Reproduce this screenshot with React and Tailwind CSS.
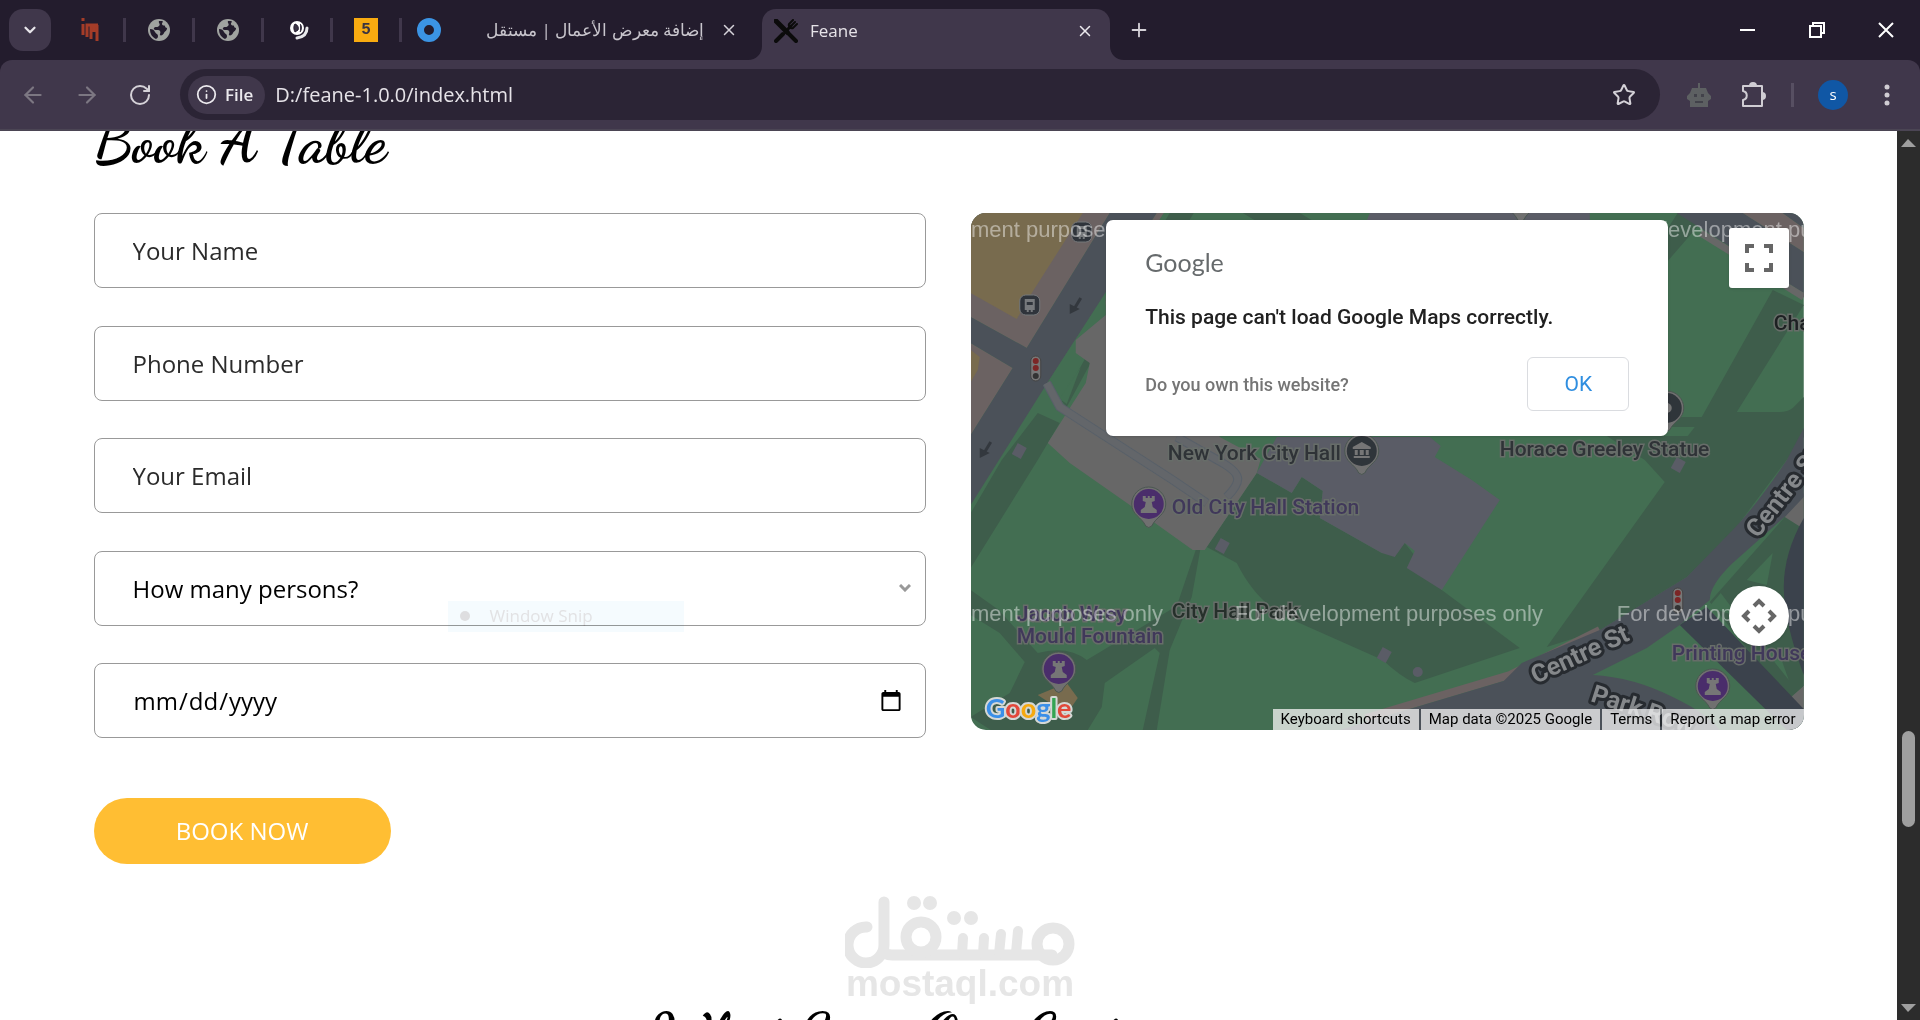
import React from 'react';
import { ArrowLeft, ArrowRight, ChevronDown, Info, Plus, RotateCw, Star, X } from 'lucide-react';

const GlobeIcon = () => (
  <svg viewBox="0 0 24 24" className="h-6 w-6">
    <circle cx="12" cy="12" r="11" fill="#a0a3a0" />
    <path d="M12 3c-1 2 2 3 0 5s-4 0-5 2 2 2 4 2 3 2 2 4 3 2 4-1c1-2 3-2 3-5-1 0-2-1-2-2s-3 0-3-2 2-2 0-3z" fill="#231c2d" />
    <path d="M3 11c3 0 4 1 5 3s3 2 3 4-1 2-2 3c-4-2-6-5-6-10z" fill="#231c2d" />
  </svg>
);

const RedIcon = () => (
  <svg viewBox="0 0 18 24" className="h-6 w-[18px]" fill="none" stroke="#a43c28" strokeWidth="3">
    <path d="M2 0v3M2 6v11M6 19V7h11M10 8v13M13 8v6M16 7v16" />
  </svg>
);

const SwirlIcon = () => (
  <svg viewBox="-6 0 28 22" className="h-[22px] w-[28px]">
    <circle cx="8" cy="9" r="7" fill="#fff" />
    <path d="M6 5c-2 3-1 6 0 8l3-2c1-2 0-5-3-6zM11 5c2 2 2 5 0 8" stroke="#231c2d" strokeWidth="1" fill="#3b3446" />
    <path d="M18 9c0 5-3 9-10 10" stroke="#e9e9ec" strokeWidth="3" fill="none" strokeLinecap="round" />
  </svg>
);

const FiveIcon = () => (
  <span className="flex h-6 w-6 items-center justify-center bg-[#f9ab10] font-mono text-base font-bold text-[#3b3440]">5</span>
);

const FoodIcon = () => (
  <svg viewBox="0 0 24 24" className="h-6 w-6 shrink-0" fill="none" stroke="#0b0b0b" strokeLinecap="round">
    <path d="M2 2l11 11" strokeWidth="5" />
    <path d="M12 12l10 10M2 22l7-7" strokeWidth="4" />
    <path d="M14 10l3-3" strokeWidth="3" />
    <path d="M19 1l-4 4c-1 3 2 5 4 4l4-4M21 3l-4 4" strokeWidth="2" />
  </svg>
);

const RobotIcon = () => (
  <svg viewBox="0 0 24 24" className="h-6 w-6" fill="#5d6062">
    <path d="M11 0h2v5h6l2 5 3 3v3l-3 2v6H3v-6l-3-2v-3l3-3 2-5h6z" />
    <path d="M7 11h3v3H7zM14 11h3v3h-3zM8 18h8v2H8z" fill="#42424a" />
  </svg>
);

const PuzzleIcon = () => (
  <svg viewBox="0 0 26 26" className="h-[26px] w-[26px]" fill="none" stroke="#d0cdd3" strokeWidth="2" strokeLinejoin="round">
    <path d="M2 4h19v20H2v-6c5-1 5-8 0-9z" />
    <path d="M9 4a3 3 0 0 1 6 0zM21 11a3 3 0 0 1 0 6z" fill="#d0cdd3" />
  </svg>
);

const pinnedTabs = [
  { name: 'Pinned 1', icon: <RedIcon /> },
  { name: 'Pinned 2', icon: <GlobeIcon /> },
  { name: 'Pinned 3', icon: <GlobeIcon /> },
  { name: 'Pinned 4', icon: <SwirlIcon /> },
  { name: 'Pinned 5', icon: <FiveIcon /> },
];

const TabStrip = () => (
  <div className="flex h-[60px] shrink-0 items-center bg-[#231c2d] pl-[9px]">
    <button aria-label="Search tabs" className="flex h-[42px] w-[42px] items-center justify-center rounded-[14px] bg-[#40374b]">
      <ChevronDown size={18} strokeWidth={3} color="#e8e6ea" />
    </button>
    <div className="ml-[6px] flex items-center">
      {pinnedTabs.map((tab) => (
        <div key={tab.name} className="flex h-6 w-[69px] items-center border-r-[3px] border-[#40374b]">
          <button aria-label={tab.name} className="flex w-full items-center justify-center">{tab.icon}</button>
        </div>
      ))}
    </div>
    <div className="flex w-[360px] items-center pr-6 pl-[15px]">
      <span className="h-6 w-6 shrink-0 rounded-full border-[7px] border-[#3b94e4]" />
      <span dir="rtl" className="ml-auto text-[17px] whitespace-nowrap text-[#c9c6cd]">إضافة معرض الأعمال | مستقل</span>
      <button aria-label="Close tab" className="ml-4"><X size={18} color="#d5d2d8" /></button>
    </div>
    <div className="relative flex h-[51px] w-[348px] items-center self-end rounded-t-[14px] bg-[#40374b] px-3 pb-2">
      <svg viewBox="0 0 14 14" className="absolute bottom-0 -left-[14px] h-[14px] w-[14px]">
        <path d="M14 0v14H0C8 14 14 8 14 0z" fill="#40374b" />
      </svg>
      <svg viewBox="0 0 14 14" className="absolute -right-[14px] bottom-0 h-[14px] w-[14px]">
        <path d="M0 0v14h14C6 14 0 8 0 0z" fill="#40374b" />
      </svg>
      <FoodIcon />
      <span className="ml-3 text-[17px] text-[#e6e3e8]">Feane</span>
      <button aria-label="Close tab" className="ml-auto mr-1"><X size={18} color="#eceaee" /></button>
    </div>
    <button aria-label="New tab" className="ml-[18px]"><Plus size={22} color="#d5d2d8" /></button>
    <div className="ml-auto flex">
      <button aria-label="Minimize" className="flex w-[69px] items-center justify-center">
        <svg width="15" height="15" stroke="#fff" strokeWidth="2"><path d="M0 7h15" /></svg>
      </button>
      <button aria-label="Restore" className="flex w-[69px] items-center justify-center">
        <svg width="16" height="16" fill="none" stroke="#fff" strokeWidth="2"><path d="M1 4h11v11H1zM4 4V1h11v10h-3" /></svg>
      </button>
      <button aria-label="Close window" className="flex w-[69px] items-center justify-center">
        <svg width="16" height="16" stroke="#fff" strokeWidth="2"><path d="M1 1l14 14M15 1L1 15" /></svg>
      </button>
    </div>
  </div>
);

const Toolbar = () => (
  <div className="bg-[#231c2d]">
    <div className="flex h-[71px] items-center rounded-t-xl border-b-2 border-[#4b4554] bg-[#40374b] pr-[30px] pl-5">
      <div className="flex w-40 shrink-0 items-center gap-7">
        <button aria-label="Back"><ArrowLeft size={26} color="#7c7782" /></button>
        <button aria-label="Forward"><ArrowRight size={26} color="#7c7782" /></button>
        <button aria-label="Reload"><RotateCw size={24} strokeWidth={2} color="#d5d2d8" /></button>
      </div>
      <div className="flex h-[51px] flex-1 items-center rounded-full bg-[#2b2435] pr-6 pl-2">
        <button className="flex h-[38px] items-center gap-2 rounded-full bg-[#40374b] pr-3 pl-2 text-[17px] font-semibold text-[#eceaee]">
          <Info size={21} /> File
        </button>
        <input
          aria-label="Address"
          defaultValue="D:/feane-1.0.0/index.html"
          className="ml-[10px] min-w-0 flex-1 text-[20px] text-[#e6e3e8] outline-none"
        />
        <button aria-label="Bookmark"><Star size={24} strokeWidth={2} color="#d5d2d8" /></button>
      </div>
      <div className="ml-[27px] flex items-center">
        <button aria-label="Assistant"><RobotIcon /></button>
        <button aria-label="Extensions" className="ml-[30px]"><PuzzleIcon /></button>
        <span className="ml-6 h-6 w-[3px] bg-[#574f62]" />
        <button aria-label="Profile" className="ml-6 flex h-[30px] w-[30px] items-center justify-center rounded-full bg-[#1057a5] text-[15px] text-white">s</button>
        <button aria-label="Menu" className="ml-9">
          <svg width="6" height="24" fill="#d0cdd3"><circle cx="3" cy="4" r="2.5" /><circle cx="3" cy="12" r="2.5" /><circle cx="3" cy="20" r="2.5" /></svg>
        </button>
      </div>
    </div>
  </div>
);

const Pin = ({ x, y, color, children }) => (
  <g transform={`translate(${x} ${y})`}>
    <path d="M-17 0a17 17 0 1 1 34 0c0 11-10 13-14 22q-3 3-6 0c-4-9-14-11-14-22z" fill="#707070" stroke="#4a5751" />
    <circle r="15" fill={color} />
    {children}
  </g>
);

const Tower = () => (
  <path d="M-6-8h3v2h2v-2h2v2h2v-2h3v5l-3 1 1 5 4 3v3h-16v-3l4-3 1-5-3-1z" fill="#767676" />
);

const Square = ({ x, y }) => (
  <path transform={`translate(${x} ${y})`} d="M-2-8l9 5-6 11-9-5z" fill="#5a5c66" />
);

const Bus = ({ x, y }) => (
  <g transform={`translate(${x} ${y})`}>
    <rect x="-10" y="-10" width="20" height="20" rx="6" fill="#2f343b" stroke="#75787b" />
    <path d="M-5-6h10v11h-2v2h-2V5h-2v2h-2V5h-2z" fill="#777a7d" />
    <path d="M-3-3h6v3h-6z" fill="#2f343b" />
  </g>
);

const Light = ({ x, y }) => (
  <g transform={`translate(${x} ${y})`}>
    <rect x="-5" y="-12" width="10" height="25" rx="5" fill="#777" stroke="#444" />
    <circle cy="-7" r="3" fill="#7c2626" />
    <circle r="3" fill="#7c2626" />
    <circle cy="8" r="3" fill="#333" />
  </g>
);

const Arrow = ({ x, y }) => (
  <g transform={`translate(${x} ${y})`}>
    <path d="M5-8L-1 2" stroke="#33383e" strokeWidth="3" />
    <path d="M-6-2V8l10-5z" fill="#33383e" />
  </g>
);

const labels = [
  { text: 'New York City Hall', x: 197, y: 247, color: '#2f3337' },
  { text: 'Horace Greeley Statue', x: 529, y: 243, color: '#2f3337' },
  { text: 'Old City Hall Station', x: 201, y: 301, color: '#40385a' },
  { text: 'Jacob Wrey', x: 46, y: 408, color: '#40385a' },
  { text: 'Mould Fountain', x: 46, y: 430, color: '#40385a' },
  { text: 'City Hall Park', x: 201, y: 405, color: '#26302b' },
  { text: 'Printing House', x: 701, y: 447, color: '#40385a' },
  { text: 'Chambers', x: 803, y: 117, color: '#1d2022' },
];

const notices = [
  { x: -116, y: 24 }, { x: 262, y: 24 }, { x: 646, y: 24 },
  { x: -116, y: 408 }, { x: 264, y: 408 }, { x: 646, y: 408 },
];

const MapCanvas = () => (
  <svg viewBox="0 0 833 517" preserveAspectRatio="xMidYMid slice" className="h-full w-full">
    <rect width="833" height="517" fill="#436e52" />

    {/* park paths */}
    <g fill="#3e5d4b">
      <path d="M199 0h24l-30 50h-24zM272 0h57l20 12h-57z" />
      <path d="M135 108v14l-39 72-5-6zM67 200l22 10-22 37L0 355v-55l31-53z" />
      <path d="M0 377l28 20 39 43q30-8 49 7l90-54 20-59h4l-9 50-22 53-13 80h-14l17-77-5-5-50 35-3 24-14 23H20L0 504l39-24 15-31-25-29-29-18z" />
      <path d="M286 260l35 20 10-16 21 14-3 27 62 35 23-10 37 47 78 58-105 35q-15-7-32-23l-90-40q-35-15-56-57l-30-16z" />
      <path d="M707 0l23 10-33 38-60 100-20-10zM802 77l31 15-67 107h43q8 0 13-4l11-11v40l-71 95-46 45-87 53-53 17 118-165-20-22-38-24h81l7-9h-27v-10h34z" />
    </g>

    {/* blocks and main road on the left */}
    <path d="M0 0h139L56 135 0 104zM0 130l42 25L0 222z" fill="#6b6262" />
    <path d="M0 0h112L61 80 46 106 0 80zM0 137l9 7-2 13-7 12z" fill="#786b4e" />
    <path d="M139 0h47L74 174 0 292v-70l42-67-42-25v-26l56 31z" fill="#4b5159" />
    <path d="M186 0h7L128 102l-4-2z" fill="#6b6262" />
    <path d="M135 80L74 174l12 16 49-80z" fill="#436e52" />

    {/* plaza in front of the hall */}
    <path d="M105 127l30-25v-14h70l44 136 41 22-4 14-52 77h-12l-63-45-60-42-22-20 22-35 16-25 4-20-14-10z" fill="#676767" />
    <path d="M110 154l-14 37-7-5z" fill="#436e52" />
    <g fill="none" strokeLinejoin="round">
      <path d="M76 170l13 24 113 73 34 23M206 224l46 26q15 9 15 16t-11 18" stroke="#586069" strokeWidth="9" />
      <path d="M76 170l13 24 113 73 34 23M206 224l46 26q15 9 15 16t-11 18" stroke="#63666a" strokeWidth="7" />
    </g>

    {/* city hall buildings */}
    <path d="M399 0h220v10H395zM306 224h153l11 9-6 11 37 23 28 20-58 90-35-22 8-17-10-8-10 14-13-4-62-35 3-27-21-14-10 16-35-20z" fill="#5a5c66" />
    <Square x={49} y={238} />
    <Square x={252} y={333} />
    <Square x={414} y={442} />
    <Square x={708} y={252} />
    <circle cx="447" cy="459" r="5" fill="#5a5c66" />

    {/* top right street */}
    <path d="M706 0h66l61 39v41z" fill="#4b5159" />
    <path d="M772 0h40l21 15v24z" fill="#6b6262" />
    <path d="M812 0h21v15z" fill="#4b5159" />
    <path d="M730 20l103 64" stroke="#676767" strokeWidth="7" />

    {/* Centre St and Park Row */}
    <path d="M814 304l-75 85 78 98 16-14V284z" fill="#3e5d4b" />
    <path d="M802 340l-26 27 20 5zM790 432l28 35-10-28zM750 380l-12 14 30 10z" fill="#436e52" />
    <path d="M814 304l19-24v36zM817 487l16-14v30z" fill="#676767" />
    <path d="M833 305q-20 35-20 69t20 88z" fill="#3b424c" />
    <path d="M709 412l27-18 97 102v21h-17z" fill="#3b424c" />
    <path d="M395 505l144-43 90-45" stroke="#6b6262" strokeWidth="8" fill="none" />
    <path d="M833 215l-17 32q-30 45-54 70l-46 47-87 53-78 33q-8 8-18 18l-104 31-60 18h380q-10-15-47-33-40-20-80-22l54-27 33-23 30-25q0-15 23-37l54-48 17-18z" fill="#4b5159" />

    <Bus x={111} y={19} />
    <Bus x={59} y={92} />
    <Light x={65} y={155} />
    <Light x={707} y={387} />
    <Arrow x={105} y={93} />
    <Arrow x={15} y={237} />

    <path d="M67 482l29-12 11 15-11 16z" fill="#786b4e" />
    <Pin x={178} y={291} color="#4a2d6b"><Tower /></Pin>
    <Pin x={88} y={456} color="#4a2d6b"><Tower /></Pin>
    <Pin x={742} y={473} color="#4a2d6b"><Tower /></Pin>
    <Pin x={391} y={238} color="#2f353a">
      <path d="M-9-4l9-5 9 5v2H-9zM-8 5H8v2H-8zM-7-1h3v5h-3zM-2-1h4v5h-4zM4-1h3v5H4z" fill="#767676" />
    </Pin>
    <Pin x={696} y={195} color="#2f353a"><circle r="5" fill="#767676" /></Pin>
    <Pin x={550} y={-15} color="#2f353a" />

    <g className="font-['Roboto',sans-serif] text-[21px] font-medium" stroke="#676d69" strokeWidth="3" paintOrder="stroke">
      {labels.map((l) => (
        <text key={l.text} x={l.x} y={l.y} fill={l.color}>{l.text}</text>
      ))}
    </g>
    <g className="font-['Roboto',sans-serif] text-[25px] font-bold" fill="#85888b" stroke="#272b30" strokeWidth="6" paintOrder="stroke" strokeLinejoin="round">
      <text transform="translate(565 471) rotate(-25)">Centre St</text>
      <text transform="translate(787 326) rotate(-52)">Centre St</text>
      <text transform="translate(619 488) rotate(18)">Park Row</text>
    </g>
    <g className="font-['Liberation_Sans',sans-serif] text-[22px]" fill="#fff" fillOpacity="0.45">
      {notices.map((n) => (
        <text key={`${n.x},${n.y}`} x={n.x} y={n.y}>For development purposes only</text>
      ))}
    </g>

    <g className="font-['Lato',sans-serif] text-[27px] font-bold" stroke="#d5d8d6" strokeWidth="4" paintOrder="stroke" strokeLinejoin="round">
      <text x="15" y="505" fill="#3b8fe8">
        G<tspan fill="#e2483a">o</tspan><tspan fill="#f5a90f">o</tspan>g<tspan fill="#35a453">l</tspan><tspan fill="#e2483a">e</tspan>
      </text>
    </g>
  </svg>
);

const GoogleMap = () => (
  <div className="relative h-[517px] overflow-hidden rounded-[15px] font-['Roboto',sans-serif]">
    <MapCanvas />
    <div className="absolute right-0 bottom-0 flex h-[21px] gap-[2px] text-[15px] leading-[21px] text-black">
      <button className="bg-[#f5f5f5]/75 px-2">Keyboard shortcuts</button>
      <span className="bg-[#f5f5f5]/75 px-2">Map data ©2025 Google</span>
      <a href="#terms" className="bg-[#f5f5f5]/75 px-2">Terms</a>
      <a href="#report" className="bg-[#f5f5f5]/75 px-2">Report a map error</a>
    </div>
    <div role="dialog" className="absolute inset-x-0 top-[7px] mx-auto flex h-[216px] w-[562px] flex-col rounded-[7px] bg-white px-[39px] pt-[26px] shadow">
      <p className="font-['Lato',sans-serif] text-[25px] leading-8 text-[#666a6c]">Google</p>
      <p className="mt-[25px] text-[21px] leading-7 font-medium text-[#212121]">This page can't load Google Maps correctly.</p>
      <div className="mt-[26px] flex items-center justify-between">
        <a href="#owner" className="text-[18px] font-medium text-[#757575]">Do you own this website?</a>
        <button className="h-[54px] w-[102px] rounded-md border border-[#dadce0] pt-[2px] text-[21px] text-[#2f8ee0]">OK</button>
      </div>
    </div>
    <button aria-label="Toggle fullscreen" className="absolute top-[15px] right-[15px] flex h-[60px] w-[60px] items-center justify-center rounded-[3px] bg-white shadow">
      <svg width="28" height="28" fill="none" stroke="#666" strokeWidth="4">
        <path d="M2 9V2h7M19 2h7v7M26 19v7h-7M9 26H2v-7" />
      </svg>
    </button>
    <button aria-label="Map camera controls" className="absolute right-[15px] bottom-[84px] flex h-[60px] w-[60px] items-center justify-center rounded-full bg-white shadow">
      <svg width="36" height="36" fill="none" stroke="#666" strokeWidth="4">
        <path d="M13 8l5-5 5 5M13 28l5 5 5-5M8 13l-5 5 5 5M28 13l5 5-5 5" />
      </svg>
    </button>
  </div>
);

const fieldClass =
  'block h-[75px] w-full rounded-[8px] border border-[#999] bg-white pl-[38px] text-[24px] text-black outline-none placeholder:text-[#2b2b2b]';

const BookingForm = () => (
  <form onSubmit={(e) => e.preventDefault()}>
    <div className="flex h-[525px] flex-col justify-between">
      <input type="text" aria-label="Your Name" placeholder="Your Name" className={fieldClass} />
      <input type="text" aria-label="Phone Number" placeholder="Phone Number" className={fieldClass} />
      <input type="email" aria-label="Your Email" placeholder="Your Email" className={fieldClass} />
      <div className="relative">
        <select aria-label="How many persons?" defaultValue="" className={`${fieldClass} appearance-none pt-[2px]`}>
          <option value="" disabled>How many persons?</option>
          <option>2</option>
          <option>3</option>
          <option>4</option>
          <option>5</option>
        </select>
        <svg viewBox="0 0 12 8" className="pointer-events-none absolute top-[33px] right-[15px] h-2 w-3" fill="none" stroke="#999" strokeWidth="3">
          <path d="M1 1l5 5 5-5" />
        </svg>
        <div className="pointer-events-none absolute top-[50px] left-[354px] flex h-[31px] w-[236px] items-center gap-5 bg-[#f5fbfe] pl-3 text-[17px] text-[#e2e2e4] mix-blend-multiply">
          <span className="h-[10px] w-[10px] rounded-full bg-[#dedee0]" />
          Window Snip
        </div>
      </div>
      <input type="date" aria-label="Date" className={`${fieldClass} pr-5`} />
    </div>
    <button className="mt-[60px] h-[66px] w-[297px] rounded-full bg-[#ffbe33] text-[24px] text-white">BOOK NOW</button>
  </form>
);

const Watermark = () => (
  <div className="pointer-events-none absolute inset-x-0 bottom-5 flex flex-col items-center pl-[23px] text-[#e6e6e6]">
    <svg viewBox="0 0 230 72" className="h-[72px] w-[230px]" fill="none" stroke="currentColor" strokeWidth="11" strokeLinecap="round">
      <path d="M22 31a18 18 0 1 0 17 18V6M39 54q0 5 8 5h160" />
      <circle cx="76" cy="41" r="15" />
      <circle cx="208" cy="48" r="16" />
      <path d="M118 42l-1 16M139 42l-1 16M156 38l-2 20M173 35l-2 22" strokeWidth="10" />
      <g fill="currentColor" stroke="none">
        <circle cx="69" cy="7" r="7" />
        <circle cx="85" cy="7" r="7" />
        <circle cx="109" cy="22" r="7" />
        <circle cx="126" cy="22" r="7" />
      </g>
    </svg>
    <span className="font-['Liberation_Sans',sans-serif] text-[37px] leading-8 font-bold">mostaql.com</span>
  </div>
);

const scriptHeading = "font-['Dancing_Script','Liberation_Serif',serif] text-[60px] leading-[72px] font-bold text-black";

const Page = () => (
  <main className="relative flex-1 overflow-hidden bg-white">
    <section className="mx-auto -mt-[25px] max-w-[1710px]">
      <h2 className={scriptHeading}>Book A Table</h2>
      <div className="mt-[35px] grid grid-cols-2 gap-[45px]">
        <BookingForm />
        <GoogleMap />
      </div>
    </section>
    <section className="mt-[135px] text-center">
      <h2 className={scriptHeading}>What Says Our Customers</h2>
    </section>
    <Watermark />
  </main>
);

const Scrollbar = () => (
  <div className="flex w-[23px] shrink-0 flex-col items-center bg-[#2c2c2c] py-2">
    <svg width="15" height="8" fill="#9f9f9f"><path d="M0 8l7-8 8 8z" /></svg>
    <div className="flex w-full flex-1 flex-col items-center">
      <div className="grow-[584]" />
      <div className="h-24 w-[13px] rounded-full bg-[#9f9f9f]" />
      <div className="grow-[177]" />
    </div>
    <svg width="15" height="8" fill="#9f9f9f"><path d="M0 0l7 8 8-8z" /></svg>
  </div>
);

const App = () => {
  return (
    <div className="flex h-screen flex-col overflow-hidden font-['Open_Sans',sans-serif]">
      <TabStrip />
      <Toolbar />
      <div className="flex min-h-0 flex-1">
        <Page />
        <Scrollbar />
      </div>
    </div>
  );
};

export default App;
